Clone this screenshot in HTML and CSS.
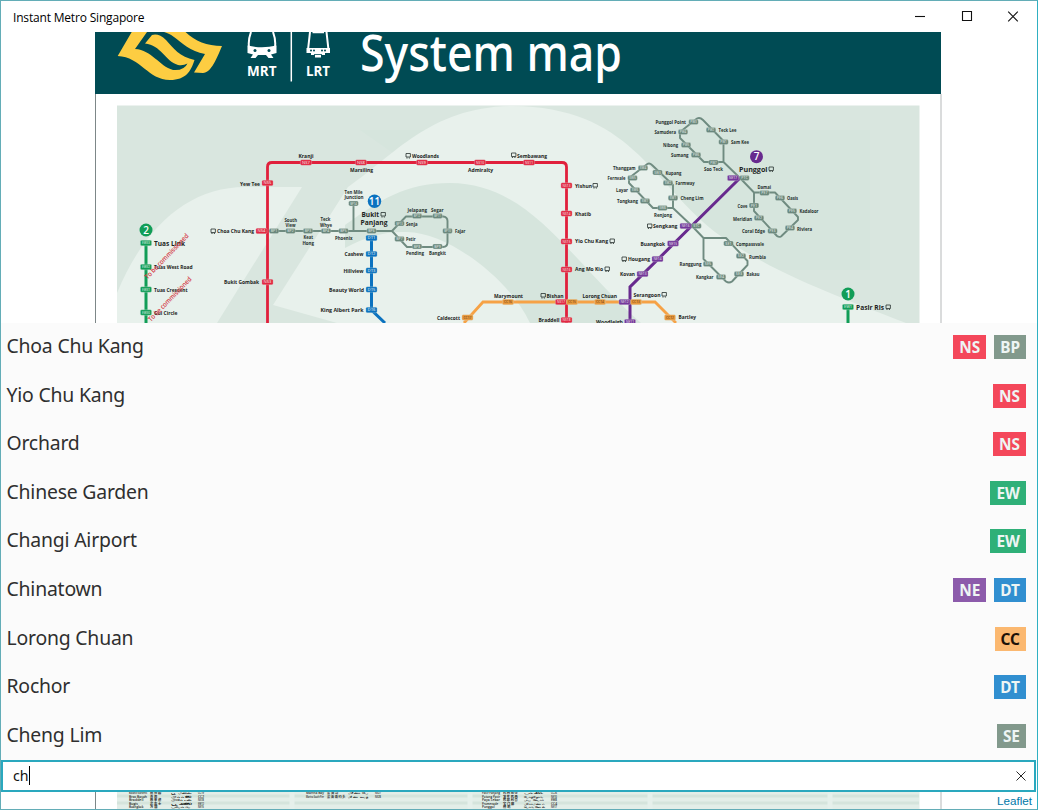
FILE: index.html
```html
<!DOCTYPE html>
<html lang="en">
<head>
    <meta charset="UTF-8">
    <meta name="viewport" content="width=device-width, initial-scale=1.0">
    <title>Instant Metro Singapore</title>
    <link rel="stylesheet" href="styles.css">
</head>
<body>
    <div class="window">
        <header class="titlebar">
            <span class="title">Instant Metro Singapore</span>
            <div class="controls">
                <svg width="12" height="12" viewBox="0 0 12 12"><path d="M1 5.500h10"/></svg>
                <svg width="12" height="12" viewBox="0 0 12 12"><path d="M1.500 .5h9v9h-9z"/></svg>
                <svg width="12" height="12" viewBox="0 0 12 12"><path d="M1.200 .7l9.600 9.600M10.800 .7l-9.600 9.600"/></svg>
            </div>
        </header>

        <svg class="map" id="map" width="847" height="291" viewBox="95 32 847 291">
            <defs>
                <clipPath id="area"><path d="M117 105.500H919.500V323H117z"/></clipPath>
            </defs>
            <rect x="95" y="32" width="847" height="291" fill="#fff"/>
            <path d="M95.500 94V323" stroke="#7d8788"/>
            <path d="M941 94V323" stroke="#b5b8b9"/>

            <!-- header band -->
            <rect x="95" y="32" width="846" height="62" fill="#004b54"/>
            <g fill="#fdcd42">
                <path d="M164 32H185.500C195 41 207 46 222 46C217 58 211 73 203 73L194 72.500L205 54C190 51 182 43 174 37C170 34 167 33 164 32z"/>
                <path d="M131.700 32L117.700 56C141 57 148 80 170 80C186 80 191 71 194.500 60C180 57 173 48 166 40C161 35 156 33.500 152 35L145 43.500C161 45 165 61 178 65Q183 66 187.500 63.500Q184 71 173 70C159 66 152 50 135 49L147 32z"/>
            </g>
            <g fill="none" stroke="#fff" stroke-width="2">
                <path d="M251 32Q248 40 249 47M273 32Q276 40 275 47"/>
                <path d="M310 32L308 50H328.500L326.500 32"/>
            </g>
            <path d="M247.500 45.500Q262 49 276.500 45.500V53L271 54.500L273.500 58H268.500L266 55H258L255.500 58H250.500L253 54.500L247.500 53z" fill="#fff"/>
            <path d="M306.500 48H330V53H325V55H321V57.500H315V55H311V53H306.500z" fill="#fff"/>
            <g fill="#004b54">
                <circle cx="255" cy="50.500" r="1.500"/><circle cx="269" cy="50.500" r="1.500"/>
                <circle cx="311" cy="50.500" r="1"/><circle cx="314" cy="50.500" r="1"/>
                <circle cx="322" cy="50.500" r="1"/><circle cx="325" cy="50.500" r="1"/>
                <path d="M314 54h8v.8h-8z"/>
            </g>
            <path d="M312.500 32.500h11.500" stroke="#fff" stroke-width="1.500"/>
            <path d="M291.300 32V81.500" stroke="#fff" stroke-width="1.500"/>
            <text class="mode" x="247" y="75.500" textLength="29.500" lengthAdjust="spacingAndGlyphs">MRT</text>
            <text class="mode" x="306" y="75.500" textLength="24" lengthAdjust="spacingAndGlyphs">LRT</text>
            <text class="heading" x="360" y="70.500" textLength="262" lengthAdjust="spacingAndGlyphs">System map</text>

            <!-- background pattern -->
            <g clip-path="url(#area)">
                <path d="M117 105H920V323H117z" fill="#d9e6df"/>
                <path d="M360 130H870V270H560z" fill="#d6e5dd"/>
                <path d="M117 293C145 225 190 187 245 187H302L217 323H117z" fill="#e8f1ec"/>
                <path d="M273 305L348 187C395 155 430 107 512 106C630 107 650 180 715 232C765 268 820 290 906 323H337z" fill="#e8f1ec"/>
                <path d="M345 225C380 200 405 183 450 183C530 183 570 260 641 323H530C510 280 450 233 407 232C385 231 365 237 345 248z" fill="#d6e5dd"/>
            </g>

            <!-- lines -->
            <g class="lrt">
                <path d="M267.500 231H392L406 216.500H443Q447.500 217 447.500 221V242Q447.500 247 443 247H407L392 231M353.500 204V231"/>
                <path d="M740 178L723.500 162H704L680 138V132L697 118.500Q700 117 703 120L723.500 141V162M740 178L754 192.500H775L798 217V220L781 236.500Q779 237.500 777 236L754 211V192.500"/>
                <path d="M692 226L673 208H653L629 183V178L646 165Q649 162 652 165L673 185V208M692 226L703.500 238H726L747.500 261V265L732 281.500Q729 283.500 726 281.500L703.500 259V238"/>
            </g>
            <path class="rail ns" d="M267.500 323V167Q267.500 162.500 272 162.500H562Q566.500 162.500 566.500 167V323"/>
            <path class="rail ew" d="M146 242V323M848 307V323"/>
            <path class="rail dt" d="M371.500 238V310L385 323"/>
            <path class="rail cc" d="M464 323L483 302H655L676 323"/>
            <path class="rail ne" d="M740 178L630 287V323"/>

            <g class="terminals">
                <circle cx="146" cy="230" r="6.500" fill="#119d57"/><text x="146" y="233.500">2</text>
                <circle cx="374.500" cy="201.300" r="6.700" fill="#0b72bf"/><text x="374.500" y="204.800">11</text>
                <circle cx="756.500" cy="156.700" r="6.500" fill="#682a8e"/><text x="756.500" y="160.200">7</text>
                <circle cx="848" cy="294" r="6.500" fill="#119d57"/><text x="848" y="297.500">1</text>
            </g>
        </svg>

        <ul class="results">
            <li><span>Choa Chu Kang</span><b class="tag ns">NS</b><b class="tag lr">BP</b></li>
            <li><span>Yio Chu Kang</span><b class="tag ns">NS</b></li>
            <li><span>Orchard</span><b class="tag ns">NS</b></li>
            <li><span>Chinese Garden</span><b class="tag ew">EW</b></li>
            <li><span>Changi Airport</span><b class="tag ew">EW</b></li>
            <li><span>Chinatown</span><b class="tag ne">NE</b><b class="tag dt">DT</b></li>
            <li><span>Lorong Chuan</span><b class="tag cc">CC</b></li>
            <li><span>Rochor</span><b class="tag dt">DT</b></li>
            <li><span>Cheng Lim</span><b class="tag lr">SE</b></li>
        </ul>

        <div class="search">
            <span class="query">ch</span><i class="caret"></i>
            <svg class="clear" width="10" height="10" viewBox="0 0 10 10"><path d="M.5.5l9 9M9.500.5l-9 9"/></svg>
        </div>

        <footer class="bottom">
            <svg class="index" id="index" width="847" height="17" viewBox="95 792 847 17">
                <path d="M117 792H919.500V809H117z" fill="#e3eee8"/>
                <path d="M117 796h802M117 803h802" stroke="#d5e4dc" stroke-width="3"/>
                <path d="M292 792v17M470 792v17M650 792v17M830 792v17" stroke="#e6f0eb" stroke-width="5"/>
                <path d="M95.500 792V809" stroke="#7d8788"/>
                <path d="M941 792V809" stroke="#b5b8b9"/>
            </svg>
            <a class="leaflet">Leaflet</a>
        </footer>
    </div>
    <script src="map.js"></script>
</body>
</html>
```
FILE: styles.css
```css
* {
    box-sizing: border-box;
}
body {
    margin: 0;
    font-family: "Noto Sans", "Open Sans", sans-serif;
    background: #fff;
    color: #2f2f2f;
}
.window {
    width: 1038px;
    height: 810px;
    border: 1px solid #63adb7;
    border-right-color: #2fb0c2;
    display: flex;
    flex-direction: column;
    overflow: hidden;
    background: #fff;
}
.titlebar {
    height: 31px;
    flex: none;
    display: flex;
    align-items: center;
    justify-content: space-between;
    padding: 0 18px 0 12px;
}
.title {
    font-family: "Open Sans", sans-serif;
    font-size: 12px;
    letter-spacing: -.18px;
    padding-top: 1px;
    color: #000;
}
.controls {
    display: flex;
    gap: 34.5px;
}
.controls svg, .clear {
    fill: none;
    stroke: #111;
    stroke-width: 1.1;
}

/* Map */
.map {
    flex: none;
    display: block;
    margin-left: 94px;
}
.map text, .index text {
    font-family: "Open Sans", "Noto Sans", "Noto Sans CJK SC", sans-serif;
}
.map .heading {
    font-family: "Noto Sans", sans-serif;
    font-size: 50px;
    font-weight: 500;
    fill: #fff;
}
.map .mode {
    font-size: 14px;
    font-weight: 700;
    fill: #fff;
}
.rail {
    fill: none;
    stroke-width: 2.8;
}
.lrt {
    fill: none;
    stroke: #6f8b80;
    stroke-width: 1.9;
    stroke-linejoin: round;
}
.rail.ns { stroke: #e0203c; }
.rail.ew { stroke: #119d57; stroke-width: 3; }
.rail.dt { stroke: #0b72bf; stroke-width: 3; }
.rail.cc { stroke: #f6a246; }
.rail.ne { stroke: #682a8e; stroke-width: 3; }
.pill.ns { fill: #e32742; }
.pill.ew { fill: #119d57; }
.pill.dt { fill: #0b72bf; }
.pill.cc { fill: #e8983c; }
.pill.ne { fill: #75379b; }
.pill.lr { fill: #68867a; }
.map .code {
    font-size: 3.6px;
    font-weight: 600;
    fill: #eef5f1;
    fill-opacity: .8;
    text-anchor: middle;
}
.map .code.cc {
    fill: #5a3413;
}
.map .name {
    font-size: 5.9px;
    font-weight: 700;
    fill: #1c2422;
}
.map .name.small {
    font-size: 4.8px;
    fill: #26302d;
}
.map .name.big {
    font-size: 7.4px;
}
.map .future {
    font-size: 6.8px;
    font-weight: 600;
    fill: #d43a45;
}
.terminals text {
    fill: #fff;
    font-size: 10px;
    font-weight: 600;
    text-anchor: middle;
}
.bus {
    fill: none;
    stroke: #26302d;
    stroke-width: .8;
}

/* Search results */
.results {
    list-style: none;
    flex: none;
    height: 437px;
    margin: 0;
    padding: 0 11px 0 5.5px;
    display: grid;
    grid-template-rows: repeat(9, 1fr);
    background: #fbfbfb;
}
.results li {
    display: flex;
    align-items: center;
    gap: 8px;
}
.results span {
    flex: 1;
    font-size: 19.4px;
    letter-spacing: -.2px;
    line-height: 24px;
    padding-bottom: 2px;
}
.tag {
    height: 24px;
    padding: 0 6px;
    font-size: 15.4px;
    line-height: 25px;
    color: #eef5f4;
}
.tag.ns { background: #f4475a; }
.tag.ew { background: #2fb078; }
.tag.ne { background: #8c5bab; }
.tag.dt { background: #318fd0; }
.tag.cc { background: #fbb870; color: #1d1208; }
.tag.lr { background: #82998c; }

.search {
    flex: none;
    height: 32px;
    margin-right: 1px;
    border: 2px solid #2aa8be;
    display: flex;
    align-items: center;
    padding: 0 8px 0 10px;
    background: #fff;
}
.query {
    font-size: 14.2px;
    padding-bottom: 2px;
    color: #111;
}
.caret {
    width: 1px;
    height: 19px;
    margin-bottom: 2px;
    background: #000;
}
.clear {
    margin-left: auto;
    stroke-width: .9;
}

.bottom {
    flex: none;
    height: 17px;
    display: flex;
    justify-content: space-between;
    padding: 0 5px 0 94px;
}
.index text {
    font-size: 3.2px;
    font-weight: 600;
    fill: #1c2422;
}
.leaflet {
    font: 11.7px/17px "Liberation Sans", Arial, sans-serif;
    color: #0078a8;
}
```
FILE: map.js
```js
const NS = 'http://www.w3.org/2000/svg';
const map = document.getElementById('map');

function add(parent, tag, attrs, text) {
    const el = document.createElementNS(NS, tag);
    for (const key in attrs) el.setAttribute(key, attrs[key]);
    if (text) el.textContent = text;
    parent.appendChild(el);
}

// centre x, centre y, station code
const stations = {
    ns: [[267.5, 183, 'NS5'], [261.5, 231, 'NS4'], [267.5, 282, 'NS3'], [306, 162.5, 'NS7'], [361, 162.5, 'NS8'],
        [422, 162.5, 'NS9'], [480, 162.5, 'NS10'], [529, 162.5, 'NS11'], [566.5, 185.5, 'NS13'], [566.5, 213.5, 'NS14'],
        [566.5, 241.5, 'NS15'], [566.5, 269.5, 'NS16'], [561, 302, 'NS17'], [566.5, 320, 'NS18']],
    ew: [[146, 243, 'EW33'], [146, 267, 'EW32'], [146, 289.5, 'EW31'], [146, 312.5, 'EW30'], [848, 307, 'EW1']],
    dt: [[371.5, 238, 'DT1'], [371.5, 254, 'DT2'], [371.5, 270.5, 'DT3'], [371.5, 289.5, 'DT5'], [371.5, 310, 'DT6']],
    cc: [[508, 302, 'CC16'], [572, 302, 'CC15'], [600, 302, 'CC14'], [636, 302, 'CC13'], [670, 317.5, 'CC12'], [467.5, 317.5, 'CC17']],
    ne: [[733, 178, 'NE17'], [685.5, 226, 'NE16'], [673, 243.5, 'NE15'], [657.5, 259, 'NE14'], [642.5, 274, 'NE13'],
        [624.5, 302, 'NE12'], [630, 322, 'NE11']],
    lr: [[274, 231, 'BP1'], [290.5, 231, 'BP2'], [308, 231, 'BP3'], [326, 231, 'BP4'], [343.5, 231, 'BP5'], [353.5, 203.5, 'BP14'],
        [371.5, 231, 'BP6'], [399.5, 223.5, 'BP13'], [417, 216, 'BP12'], [437.5, 216, 'BP11'], [447.5, 231, 'BP10'],
        [399.5, 239, 'BP7'], [417, 246.5, 'BP8'], [437.5, 246.5, 'BP9'],
        [693.5, 122, 'PW3'], [683, 132, 'PW4'], [686, 145, 'PW5'], [696, 155, 'PW6'], [713.5, 162.5, 'PW7'], [711, 130, 'PW2'],
        [723.5, 142, 'PW1'], [744.5, 178, 'PTC'], [764.5, 193, 'PE7'], [780, 198, 'PE6'], [792, 211, 'PE5'], [790, 228, 'PE4'],
        [772.5, 231, 'PE3'], [759, 218, 'PE2'], [754, 205.5, 'PE1'],
        [643, 168, 'SW4'], [632.5, 178, 'SW5'], [635, 190, 'SW6'], [645, 201, 'SW7'], [662.5, 208, 'SW8'], [657.5, 172.5, 'SW3'],
        [668, 183, 'SW2'], [673, 198, 'SW1'], [696.5, 226, 'STC'], [728.5, 243.5, 'SE1'], [741, 256, 'SE2'], [739, 274, 'SE3'],
        [721, 277, 'SE4'], [708, 264, 'SE5']]
};
for (const line in stations) {
    for (const [x, y, code] of stations[line]) {
        const w = line === 'lr' ? 9.6 : 11.2, h = line === 'lr' ? 4.8 : 5.6;
        add(map, 'rect', { class: 'pill ' + line, x: x - w / 2, y: y - h / 2, width: w, height: h, rx: 1.4, stroke: '#dbe7e1', 'stroke-width': .3 });
        add(map, 'text', { class: 'code ' + line, x, y: y + 1.3, textLength: w - 3.2, lengthAdjust: 'spacingAndGlyphs' }, code);
    }
}

// left x, centre y, width, name, size
const names = [
    [298.5, 155.5, 15, 'Kranji'], [350, 169.5, 23, 'Marsiling'], [412, 156, 27, 'Woodlands'], [468, 169.5, 25, 'Admiralty'],
    [517, 155.5, 30, 'Sembawang'], [240, 183.5, 20, 'Yew Tee'], [217, 231, 37, 'Choa Chu Kang'], [224, 282, 35, 'Bukit Gombak'],
    [575, 185.5, 17, 'Yishun'], [575, 213.5, 16, 'Khatib'], [575, 241, 33, 'Yio Chu Kang'], [575, 269, 28, 'Ang Mo Kio'],
    [546.5, 295.5, 17, 'Bishan'], [538.5, 320, 21, 'Braddell'], [494, 295.5, 29, 'Marymount'], [437, 317.5, 23, 'Caldecott'],
    [582.5, 295.5, 34.5, 'Lorong Chuan'], [633.5, 294.5, 27, 'Serangoon'], [678.5, 317, 17.5, 'Bartley'], [596, 322, 27, 'Woodleigh'],
    [620, 274, 15, 'Kovan'], [628, 258.5, 22, 'Hougang'], [640.5, 243.5, 24.5, 'Buangkok'], [653, 226, 24.5, 'Sengkang'],
    [344.5, 254, 19, 'Cashew'], [343.5, 270.5, 20, 'Hillview'], [329, 289.5, 35, 'Beauty World'], [320.5, 309.5, 43, 'King Albert Park'],
    [154, 243, 31, 'Tuas Link', 'big'], [154, 267, 38.5, 'Tuas West Road'], [154, 289.5, 33.5, 'Tuas Crescent'], [154, 312.5, 23.5, 'Gul Circle'],
    [739, 169.5, 28.5, 'Punggol', 'big'], [856, 307.5, 28, 'Pasir Ris', 'big'],
    [361.5, 214.5, 17.5, 'Bukit', 'big'], [360.5, 222.5, 27, 'Panjang', 'big'],
    [344.5, 192, 18, 'Ten Mile', 'small'], [344.5, 197, 19, 'Junction', 'small'],
    [284.5, 220, 12.5, 'South', 'small'], [285.5, 225, 10, 'View', 'small'], [303.5, 237, 9.5, 'Keat', 'small'],
    [302.5, 242.5, 11.5, 'Hong', 'small'], [320.5, 219, 10, 'Teck', 'small'], [320, 224.5, 12, 'Whye', 'small'],
    [335, 238, 17.5, 'Phoenix', 'small'], [407.5, 209.5, 19.5, 'Jelapang', 'small'], [431, 209.5, 12.5, 'Segar', 'small'],
    [406, 223.5, 11.5, 'Senja', 'small'], [406, 239, 9.5, 'Petir', 'small'], [406, 253, 18, 'Pending', 'small'],
    [429, 253, 17, 'Bangkit', 'small'], [455, 231, 10.5, 'Fajar', 'small'],
    [655.5, 122, 30.5, 'Punggol Point', 'small'], [654.5, 132, 21.5, 'Samudera', 'small'], [663, 145, 15, 'Nibong', 'small'],
    [671, 154.5, 17.5, 'Sumang', 'small'], [704, 169, 19, 'Soo Teck', 'small'], [718.5, 129.5, 18, 'Teck Lee', 'small'],
    [731, 142, 18, 'Sam Kee', 'small'], [757.5, 187, 13.5, 'Damai', 'small'], [787, 198, 11, 'Oasis', 'small'],
    [799.5, 211, 19, 'Kadaloor', 'small'], [797, 228.5, 15, 'Riviera', 'small'], [742, 231, 23, 'Coral Edge', 'small'],
    [733, 218.5, 19, 'Meridian', 'small'], [737.5, 206, 10, 'Cove', 'small'],
    [613, 167.5, 22.5, 'Thanggam', 'small'], [607.5, 178, 18, 'Fernvale', 'small'], [616, 190, 12, 'Layar', 'small'],
    [617, 200.5, 21, 'Tongkang', 'small'], [654, 214.5, 18, 'Renjong', 'small'], [665.5, 172.5, 16, 'Kupang', 'small'],
    [675.5, 183, 19, 'Farmway', 'small'], [680.5, 198, 23, 'Cheng Lim', 'small'], [736, 243.5, 28, 'Compassvale', 'small'],
    [749, 256.5, 17, 'Rumbia', 'small'], [746.5, 274, 13, 'Bakau', 'small'], [679.5, 263.5, 22, 'Ranggung', 'small'],
    [696, 276.5, 17.5, 'Kangkar', 'small']
];
for (const [x, y, w, text, size] of names) {
    add(map, 'text', { class: 'name ' + (size || ''), x, y: y + (size === 'big' ? 2.6 : 2), textLength: w, lengthAdjust: 'spacingAndGlyphs' }, text);
}

// bus interchange marks
for (const [x, y] of [[406, 153.5], [511.5, 153], [211, 229], [593, 183.5], [610, 239], [605, 267], [541, 293.5], [662, 292.5],
    [622, 257], [647.5, 224], [381, 212.5], [769, 167], [886, 305]]) {
    add(map, 'path', { class: 'bus', d: `M${x} ${y}h4.4v3.5h-4.4zM${x + .4} ${y + 4.5}h1.2m1.2 0h1.2` });
}

add(map, 'text', { class: 'future', transform: 'translate(147.5 279.5) rotate(-46)', textLength: 60, lengthAdjust: 'spacingAndGlyphs' }, 'To be commissioned');
add(map, 'text', { class: 'future', transform: 'translate(151 322) rotate(-46)', textLength: 59, lengthAdjust: 'spacingAndGlyphs' }, 'To be commissioned');

// station index table
const rows = [
    [129, 794, 'Botanic Gardens', '植物园', 'பூ மலை', 'CC19'], [129, 797.5, 'Bras Basah', '百胜', 'பிராஸ்', 'CC2'],
    [129, 801, 'Braddell', '布莱德', 'பிரேடல்', 'NS18'], [129, 804.5, 'Bugis', '武吉士', 'பூகிஸ்', 'EW12'],
    [129, 808, 'Buangkok', '万国', 'புவாங்', 'NE15'],
    [306, 794, 'Marina Bay', '滨海湾', 'மரீனா பே', 'NS27'], [306, 797.5, 'Marina South Pier', '滨海南码头', 'மரீனா சவுத்', 'NS28'],
    [482, 794, 'Pasir Panjang', '巴西班让', 'பாசிர்', 'CC26'], [482, 797.5, 'Potong Pasir', '波东巴西', 'போத்தோங்', 'NE10'],
    [482, 801, 'Paya Lebar', '巴耶利峇', 'பாய லேபார்', 'EW8'], [482, 804.5, 'Promenade', '宝门廊', 'புரோமனாட்', 'CC4'],
    [482, 808, 'Punggol', '榜鹅', 'பொங்கோல்', 'NE17']
];
const index = document.getElementById('index');
for (const [x, y, name, chinese, tamil, code] of rows) {
    add(index, 'text', { x, y, textLength: Math.min(18, name.length * 1.8), lengthAdjust: 'spacingAndGlyphs' }, name);
    add(index, 'text', { x: x + 21, y, textLength: chinese.length * 3.7 }, chinese);
    add(index, 'text', { x: x + 42, y, textLength: 20, lengthAdjust: 'spacingAndGlyphs' }, tamil);
    add(index, 'text', { x: x + 69, y, textLength: 6, lengthAdjust: 'spacingAndGlyphs' }, code);
}
```
